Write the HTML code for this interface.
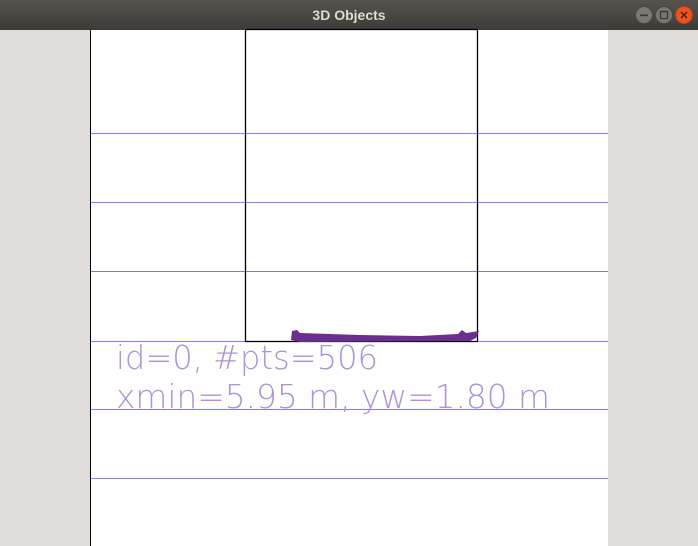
<!DOCTYPE html>
<html><head><meta charset="utf-8"><style>
html,body{margin:0;padding:0;width:698px;height:546px;overflow:hidden;background:#dfdcd9;}
</style></head><body>
<svg width="698" height="546" xmlns="http://www.w3.org/2000/svg" style="display:block">
<defs>
<linearGradient id="tb" x1="0" y1="0" x2="0" y2="1">
<stop offset="0" stop-color="#57544e"/><stop offset="1" stop-color="#3d3b37"/>
</linearGradient>
</defs>
<rect x="0" y="0" width="698" height="30" fill="url(#tb)"/>
<text x="349" y="20" text-anchor="middle" font-family="Liberation Sans, sans-serif" font-weight="bold" font-size="14" fill="#dfdbd2">3D Objects</text>
<circle cx="644" cy="15" r="8.5" fill="#7a7873" stroke="#4a4844"/>
<rect x="640" y="14.5" width="8" height="1.6" fill="#3a3835"/>
<circle cx="664" cy="15" r="8.5" fill="#7a7873" stroke="#4a4844"/>
<rect x="660.5" y="11.5" width="7" height="7" fill="none" stroke="#3a3835" stroke-width="1.3"/>
<circle cx="684" cy="15" r="8.5" fill="#e9541f" stroke="#b8401a"/>
<path d="M681 12 L687 18 M687 12 L681 18" stroke="#3a2010" stroke-width="1.3"/>
<rect x="90" y="30" width="518" height="516" fill="#fff"/>
<line x1="90.5" y1="30" x2="90.5" y2="546" stroke="#000"/>
<g stroke="#7d7dff" stroke-width="1">
<line x1="91" y1="133.5" x2="608" y2="133.5"/>
<line x1="91" y1="202.5" x2="608" y2="202.5"/>
<line x1="91" y1="271.5" x2="608" y2="271.5" stroke="#8080b0"/>
<line x1="91" y1="341.5" x2="608" y2="341.5"/>
<line x1="91" y1="409.5" x2="608" y2="409.5"/>
<line x1="91" y1="478.5" x2="608" y2="478.5"/>
</g>
<rect x="245.5" y="29.5" width="232" height="312" fill="none" stroke="#000" stroke-width="1.3"/>
<path d="M291 340 L292 331 L297 330 L300 333 L360 335 L420 336 L458 334 L462 330 L466 333 L479 331 L476 338 L470 341 L300 342 Z" fill="#6a2e8e"/>
<g font-family="DejaVu Sans, sans-serif" font-weight="200" font-size="33" fill="#b092d0">
<text x="116" y="369" textLength="262" lengthAdjust="spacingAndGlyphs">id=0, #pts=506</text>
<text x="116" y="408" textLength="434" lengthAdjust="spacingAndGlyphs">xmin=5.95 m, yw=1.80 m</text>
</g>
</svg>
</body></html>
